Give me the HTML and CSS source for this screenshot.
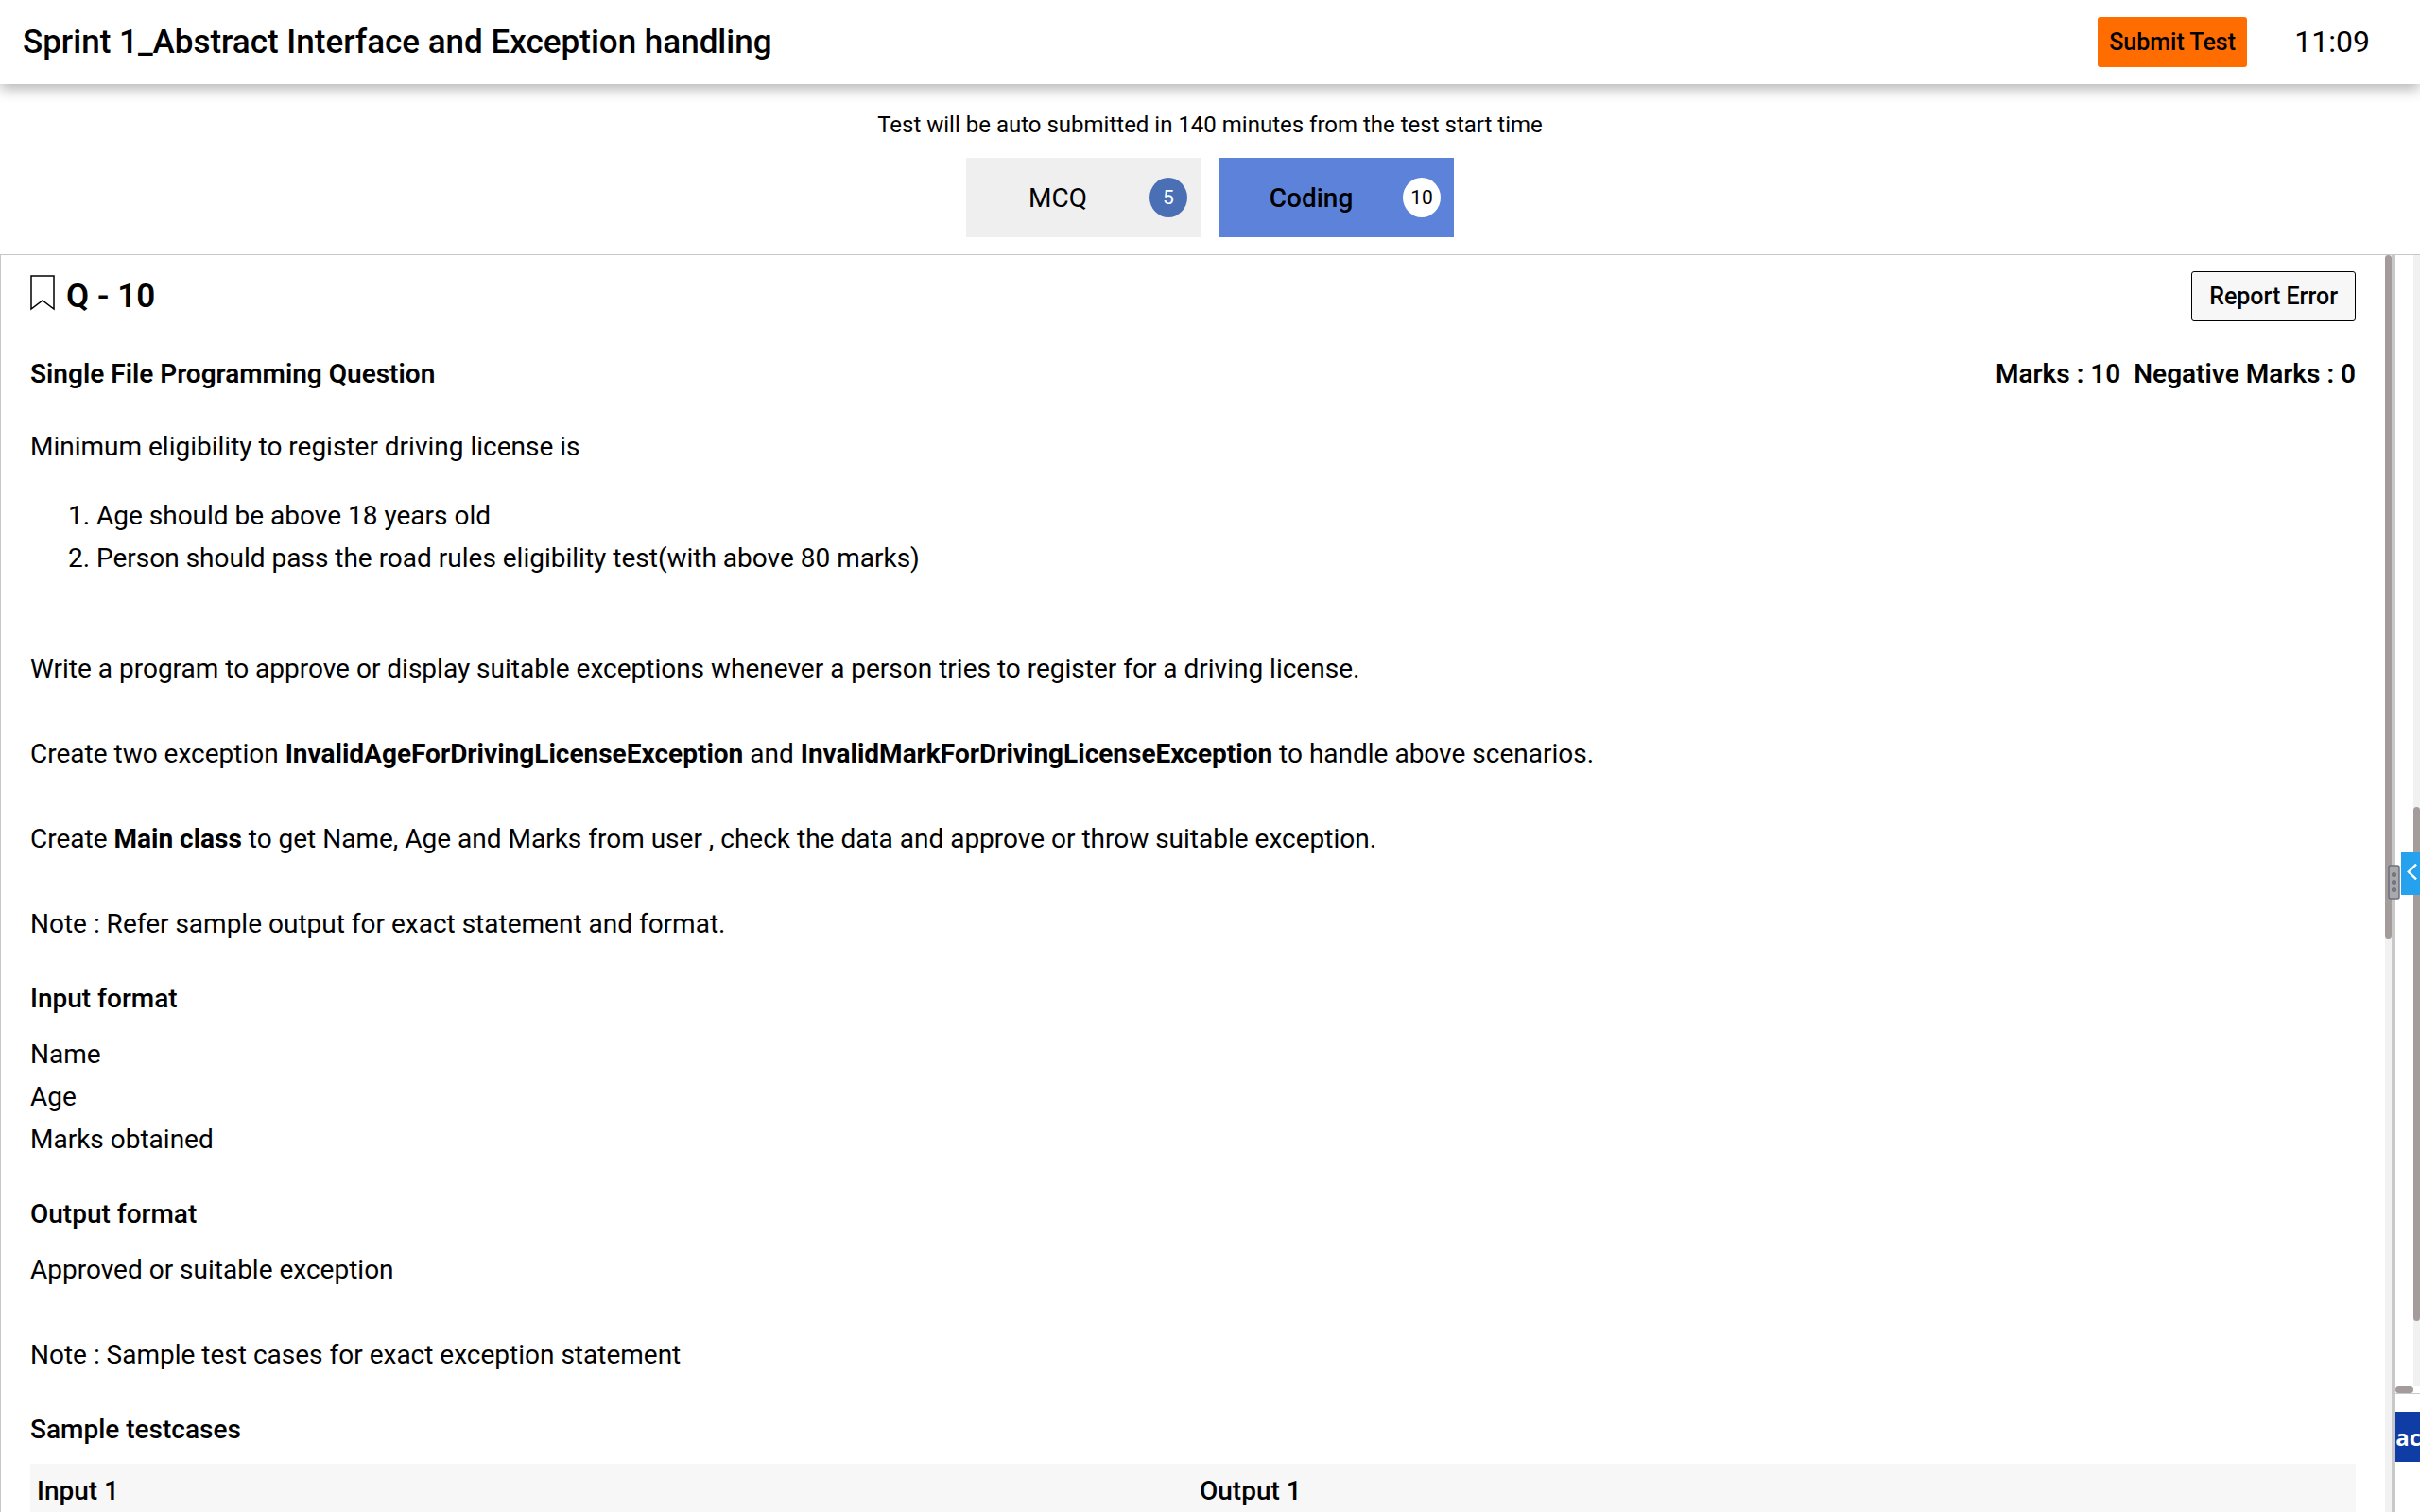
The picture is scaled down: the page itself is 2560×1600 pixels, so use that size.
FILE: index.html
```html
<!DOCTYPE html>
<html lang="en">
<head>
<meta charset="utf-8">
<meta name="viewport" content="width=device-width, initial-scale=1">
<title>Sprint 1_Abstract Interface and Exception handling</title>
<link rel="stylesheet" href="styles.css">
</head>
<body>
<header class="topbar">
  <h1 class="test-title">Sprint 1_Abstract Interface and Exception handling</h1>
  <button class="btn btn-submit" type="button">Submit Test</button>
  <time class="timer">11:09</time>
</header>

<section class="sections">
  <p class="notice">Test will be auto submitted in 140 minutes from the test start time</p>
  <nav class="tabs">
    <button class="tab" type="button"><span class="tab-name">MCQ</span><span class="count">5</span></button>
    <button class="tab tab-active" type="button"><span class="tab-name">Coding</span><span class="count">10</span></button>
  </nav>
</section>

<main class="workspace">
  <article class="question">
    <div class="row">
      <h2 class="number">
        <svg class="bookmark" viewBox="0 0 26 38" aria-hidden="true"><path d="M1 1H25V36L13 27L1 36Z" fill="none" stroke="#000" stroke-width="1.5"/></svg>
        Q - 10
      </h2>
      <button class="btn btn-report" type="button">Report Error</button>
    </div>
    <div class="row row-meta">
      <span>Single File Programming Question</span>
      <span class="marks"><span>Marks : 10</span><span>Negative Marks : 0</span></span>
    </div>

    <p class="intro">Minimum eligibility to register driving license is</p>
    <ol class="rules">
      <li>Age should be above 18 years old</li>
      <li>Person should pass the road rules eligibility test(with above 80 marks)</li>
    </ol>
    <div class="prose">
      <p>Write a program to approve or display suitable exceptions whenever a person tries to register for a driving license.</p>
      <p>Create two exception <b>InvalidAgeForDrivingLicenseException</b> and <b>InvalidMarkForDrivingLicenseException</b> to handle above scenarios.</p>
      <p>Create <b>Main class</b> to get Name, Age and Marks from user , check the data and approve or throw suitable exception.</p>
      <p>Note : Refer sample output for exact statement and format.</p>
    </div>

    <h3>Input format</h3>
    <p>Name<br>Age<br>Marks obtained</p>

    <h3>Output format</h3>
    <div class="prose">
      <p>Approved or suitable exception</p>
      <p>Note : Sample test cases for exact exception statement</p>
    </div>

    <h3>Sample testcases</h3>
    <table class="cases">
      <thead><tr><th scope="col">Input 1</th><th scope="col">Output 1</th></tr></thead>
    </table>
  </article>
  <div class="track"><div class="thumb thumb-question"></div></div>
  <div class="divider">
    <svg class="grip" viewBox="0 0 13 37" aria-hidden="true">
      <rect x="1" y="1" width="11" height="35" rx="2" fill="#a9a9a9" stroke="#6b7080" stroke-width="1.5"/>
      <g fill="#999" stroke="#6b7080" stroke-width="1.6"><circle cx="6.5" cy="10.5" r="1.7"/><circle cx="6.5" cy="18.5" r="1.7"/><circle cx="6.5" cy="26.5" r="1.7"/></g>
    </svg>
  </div>
  <aside class="editor">
    <div class="editor-view">
      <div class="track track-editor"><div class="thumb thumb-editor"></div></div>
      <div class="thumb thumb-across"></div>
    </div>
    <button class="back" type="button">Back</button>
    <button class="expand" type="button" aria-label="Expand panel">
      <svg viewBox="0 0 12 20" aria-hidden="true"><path d="M11 1.5L2 10L11 18.5" fill="none" stroke="#fff" stroke-width="2.6"/></svg>
    </button>
  </aside>
</main>
</body>
</html>
```

FILE: styles.css
```css
* { box-sizing: border-box; }

body {
  margin: 0;
  height: 100vh;
  display: flex;
  flex-direction: column;
  overflow: hidden;
  background: #fff;
  color: #000;
  font-family: Roboto, "Liberation Sans", sans-serif;
  font-size: 28px;
  line-height: 45px;
}

h1, h2, h3, p, ol { margin: 0; }
button { font-family: inherit; color: inherit; border: 0; padding: 0; }

/* Top bar */
.topbar {
  display: flex;
  align-items: center;
  padding: 18px 53px 18px 24px;
  box-shadow: 0 5px 14px rgba(0, 0, 0, 0.3);
}
.test-title { flex: 1; font-size: 35px; line-height: 53px; font-weight: 500; }
.btn {
  height: 53px;
  border-radius: 3px;
  font-size: 25px;
  font-weight: 500;
}
.btn-submit { padding: 0 12px; background: #ff6d00; }
.timer { width: 130px; text-align: right; font-size: 32px; }

/* Section tabs */
.sections {
  display: flex;
  flex-direction: column;
  align-items: center;
  gap: 12px;
  padding: 20px 0 18px;
  border-bottom: 1px solid #c8c8c8;
}
.notice { font-size: 24px; line-height: 46px; }
.tabs { display: flex; gap: 20px; }
.tab {
  display: flex;
  align-items: center;
  width: 248px;
  height: 84px;
  padding-right: 14px;
  background: #efefef;
  font-size: 28px;
}
.tab-name { flex: 1; }
.count {
  width: 40px;
  height: 42px;
  border-radius: 50%;
  background: #4a6fb5;
  color: #fff;
  font-size: 21px;
  line-height: 42px;
}
.tab-active { background: #5c83d9; font-weight: 500; }
.tab-active .count { background: #fff; color: #000; font-weight: 400; }

/* Question pane */
.workspace {
  flex: 1;
  min-height: 0;
  display: grid;
  grid-template-columns: 1fr 7px 4px 26px;
  grid-template-rows: 100%;
}
.question {
  padding: 17px 31px 0 31px;
  border-left: 1px solid #c8c8c8;
  overflow: hidden;
}
.row { display: flex; justify-content: space-between; align-items: center; }
.number { display: flex; gap: 12px; font-size: 35px; font-weight: 600; }
.bookmark { width: 26px; height: 38px; }
.btn-report { padding: 0 18px; border: 1px solid #000; background: #f7f7f7; }
.row-meta { margin: 33px 0 32px; font-weight: 600; }
.marks { display: flex; gap: 14px; }
.rules { margin: 28px 0 72px; padding-left: 70px; }
.prose { display: grid; gap: 45px; }
h3 { margin: 34px 0 14px; font-size: 28px; font-weight: 500; }
.cases {
  width: 100%;
  table-layout: fixed;
  border-collapse: collapse;
  background: #f7f7f7;
}
.cases th { padding: 6px 7px; text-align: left; font-weight: 500; }

/* Scroll bars and pane divider */
.track { background: #f1f1f1; }
.thumb { border-radius: 4px; background: #a49b9b; }
.thumb-question { height: calc(100% - 606px); }
.divider { position: relative; background: #c8c8c8; }
.grip { position: absolute; top: 645px; left: -4px; width: 13px; height: 37px; z-index: 1; }

/* Editor pane, collapsed to a strip */
.editor { position: relative; overflow: hidden; }
.editor-view {
  display: grid;
  grid-template: 1fr 7px / 1fr 7px;
  height: calc(100% - 125px);
  border-bottom: 1px solid #c8c8c8;
}
.track-editor { grid-column: 2; display: grid; grid-template-rows: 488fr 454fr 58fr; }
.thumb-editor { grid-row: 2; }
.back {
  display: block;
  width: 96px;
  height: 53px;
  margin: 19px 0 0 -35px;
  background: #103da5;
  color: #fff;
  font: 700 24px "Open Sans", "Noto Sans", sans-serif;
}
.expand {
  position: absolute;
  top: 632px;
  right: 0;
  width: 20px;
  height: 45px;
  padding: 0 3px 4px 6px;
  background: #26a1ee;
}
.expand svg { display: block; width: 11px; height: 19px; }
```
